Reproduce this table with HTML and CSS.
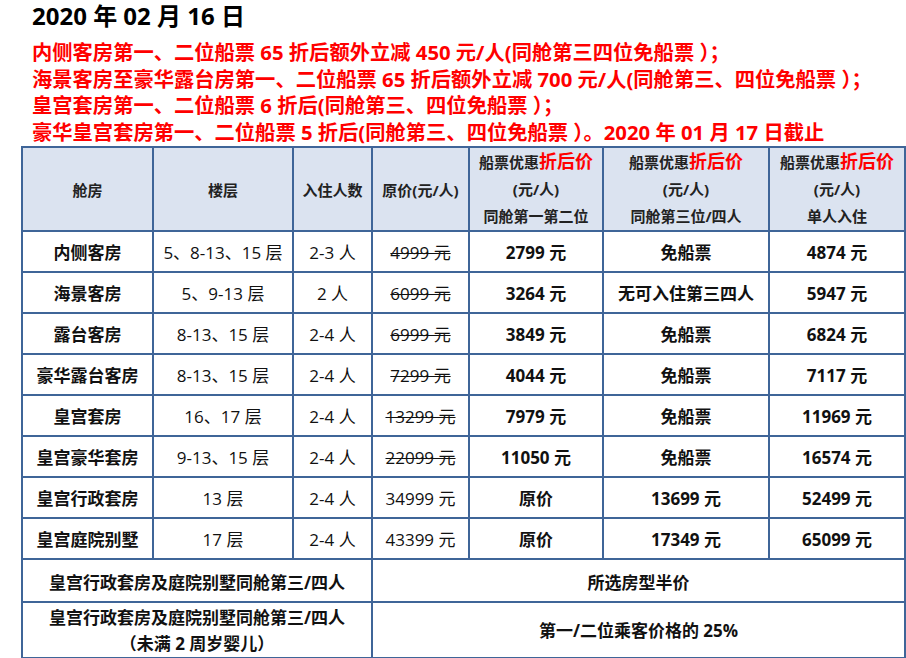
FILE: index.html
```html
<!DOCTYPE html>
<html lang="zh">
<head>
<meta charset="utf-8">
<link rel="stylesheet" href="styles.css">
</head>
<body>
<div class="page">
  <h1 class="title">2020 年 02 月 16 日</h1>
  <div class="notes">
    <p>内侧客房第一、二位船票 65 折后额外立减 450 元/人(同舱第三四位免船票 ）；</p>
    <p>海景客房至豪华露台房第一、二位船票 65 折后额外立减 700 元/人(同舱第三、四位免船票 ）；</p>
    <p>皇宫套房第一、二位船票 6 折后(同舱第三、四位免船票 ）；</p>
    <p>豪华皇宫套房第一、二位船票 5 折后(同舱第三、四位免船票 ）。2020 年 01 月 17 日截止</p>
  </div>
  <table class="price">
    <colgroup>
      <col class="c1"><col class="c2"><col class="c3"><col class="c4"><col class="c5"><col class="c6"><col class="c7">
    </colgroup>
    <thead>
      <tr>
        <th>舱房</th>
        <th>楼层</th>
        <th>入住人数</th>
        <th>原价(元/人)</th>
        <th><div class="hl">船票优惠<span class="red">折后价</span></div><div class="hl">(元/人)</div><div class="hl">同舱第一第二位</div></th>
        <th><div class="hl">船票优惠<span class="red">折后价</span></div><div class="hl">(元/人)</div><div class="hl">同舱第三位/四人</div></th>
        <th><div class="hl">船票优惠<span class="red">折后价</span></div><div class="hl">(元/人)</div><div class="hl">单人入住</div></th>
      </tr>
    </thead>
    <tbody>
      <tr><td class="b">内侧客房</td><td>5、8-13、15 层</td><td>2-3 人</td><td><s>4999 元</s></td><td class="b">2799 元</td><td class="b">免船票</td><td class="b">4874 元</td></tr>
      <tr><td class="b">海景客房</td><td>5、9-13 层</td><td>2 人</td><td><s>6099 元</s></td><td class="b">3264 元</td><td class="b">无可入住第三四人</td><td class="b">5947 元</td></tr>
      <tr><td class="b">露台客房</td><td>8-13、15 层</td><td>2-4 人</td><td><s>6999 元</s></td><td class="b">3849 元</td><td class="b">免船票</td><td class="b">6824 元</td></tr>
      <tr><td class="b">豪华露台客房</td><td>8-13、15 层</td><td>2-4 人</td><td><s>7299 元</s></td><td class="b">4044 元</td><td class="b">免船票</td><td class="b">7117 元</td></tr>
      <tr><td class="b">皇宫套房</td><td>16、17 层</td><td>2-4 人</td><td><s>13299 元</s></td><td class="b">7979 元</td><td class="b">免船票</td><td class="b">11969 元</td></tr>
      <tr><td class="b">皇宫豪华套房</td><td>9-13、15 层</td><td>2-4 人</td><td><s>22099 元</s></td><td class="b">11050 元</td><td class="b">免船票</td><td class="b">16574 元</td></tr>
      <tr><td class="b">皇宫行政套房</td><td>13 层</td><td>2-4 人</td><td>34999 元</td><td class="b">原价</td><td class="b">13699 元</td><td class="b">52499 元</td></tr>
      <tr><td class="b">皇宫庭院别墅</td><td>17 层</td><td>2-4 人</td><td>43399 元</td><td class="b">原价</td><td class="b">17349 元</td><td class="b">65099 元</td></tr>
      <tr class="wide"><td class="b" colspan="3">皇宫行政套房及庭院别墅同舱第三/四人</td><td class="b" colspan="4">所选房型半价</td></tr>
      <tr class="last"><td class="b" colspan="3">皇宫行政套房及庭院别墅同舱第三/四人<br>（未满 2 周岁婴儿）</td><td class="b" colspan="4">第一/二位乘客价格的 25%</td></tr>
    </tbody>
  </table>
</div>
</body>
</html>
```
FILE: styles.css
```css
html, body {
  margin: 0;
  padding: 0;
  background: #ffffff;
}
body {
  font-family: "Open Sans", "Noto Sans CJK SC", sans-serif;
  color: #000;
}
.page {
  width: 906px;
  height: 658px;
  overflow: hidden;
}
.title {
  margin: 0;
  padding: 1px 0 0 32px;
  font-size: 24px;
  line-height: 30px;
  font-weight: 700;
}
.notes {
  padding: 8px 0 0 32px;
  color: #ff0000;
  font-weight: 700;
  font-size: 20.3px;
  line-height: 26.5px;
}
.notes p {
  margin: 0;
  white-space: nowrap;
}
.price {
  margin: 1px 0 0 21px;
  width: 883px;
  border-collapse: collapse;
  table-layout: fixed;
  border: 2px solid #3f6598;
}
.c1 { width: 131px; }
.c2 { width: 140px; }
.c3 { width: 79px; }
.c4 { width: 97px; }
.c5 { width: 134px; }
.c6 { width: 166px; }
.c7 { width: 136px; }
.price th, .price td {
  border: 2px solid #3f6598;
  text-align: center;
  padding: 0;
  white-space: nowrap;
}
.price th {
  background: #dbe3f0;
  height: 80px;
  font-size: 15px;
  font-weight: 700;
  color: #222;
}
.price th .hl {
  line-height: 27px;
}
.red {
  color: #ff0000;
  font-size: 18px;
}
.price td {
  height: 39px;
  font-size: 17px;
  font-weight: 400;
  color: #111;
}
.price td.b {
  font-weight: 700;
}
.price td s {
  text-decoration-thickness: 1px;
}
.price tr.wide td {
  height: 39px;
  padding-top: 2px;
}
.price tr.last td {
  height: 50px;
  line-height: 26px;
  padding-top: 2px;
}
```
